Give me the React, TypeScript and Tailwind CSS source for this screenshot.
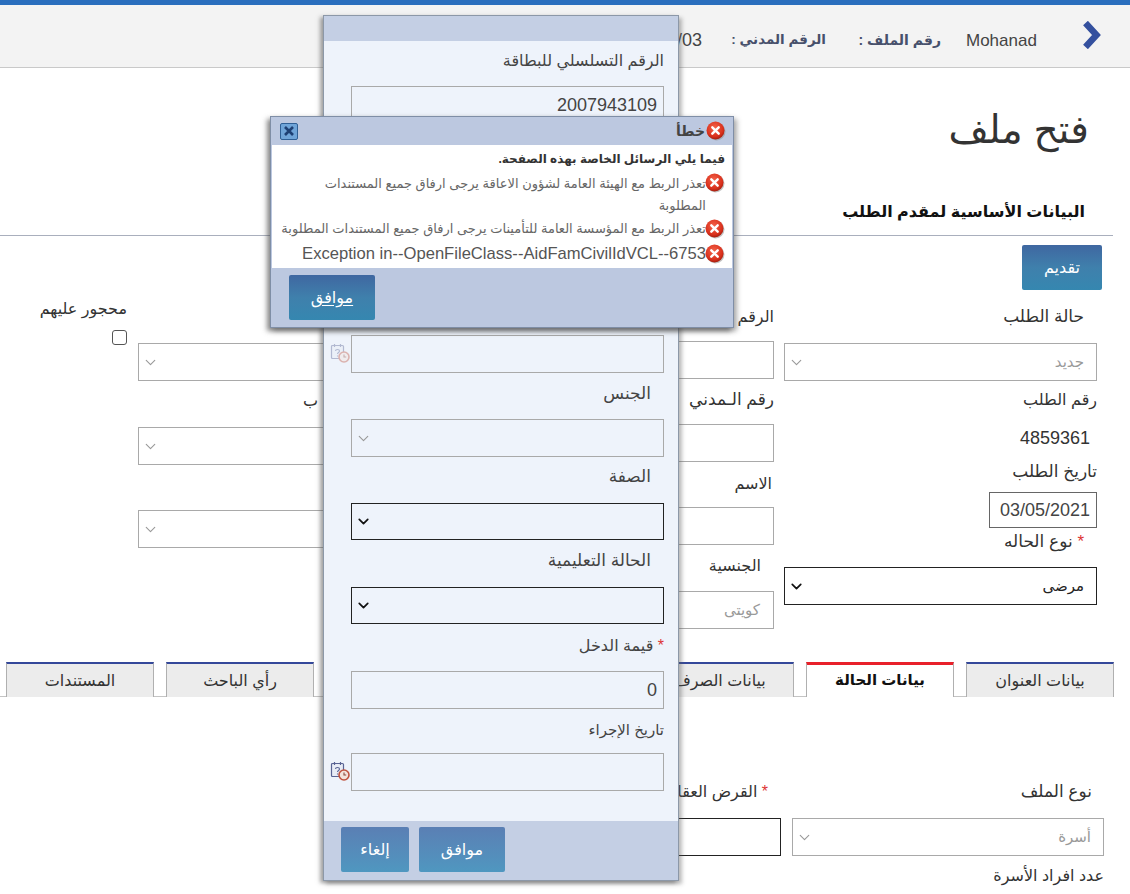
import { ChevronDown } from 'lucide-react'

const font = "[font-family:'Liberation_Sans','DejaVu_Sans',sans-serif]"

function ErrorIcon({ className = '' }: { className?: string }) {
  return (
    <svg viewBox="0 0 20 20" className={`relative z-10 w-[20px] h-[20px] flex-shrink-0 ${className}`}>
      <defs>
        <radialGradient id="errRed" cx="45%" cy="35%" r="70%">
          <stop offset="0%" stopColor="#f4634a" />
          <stop offset="70%" stopColor="#d9301c" />
          <stop offset="100%" stopColor="#93190c" />
        </radialGradient>
      </defs>
      <circle cx="10.5" cy="10.5" r="9" fill="#8a8a8a" opacity="0.5" />
      <circle cx="9.5" cy="9.5" r="9" fill="url(#errRed)" />
      <path d="M6.3 6.3l6.4 6.4M12.7 6.3l-6.4 6.4" stroke="#fff" strokeWidth="2.4" strokeLinecap="round" />
    </svg>
  )
}

function CalendarIcon({ faded = false }: { faded?: boolean }) {
  return (
    <svg viewBox="0 0 20 20" className={`w-[20px] h-[20px] flex-shrink-0 ${faded ? 'opacity-40' : ''}`}>
      <rect x="1.5" y="2.5" width="12" height="13" rx="1" fill="#e8ecf6" stroke="#5a6494" strokeWidth="1.2" />
      <path d="M4.5 1v3M10.5 1v3" stroke="#5a6494" strokeWidth="1.2" />
      <path d="M5.5 8c0-2 4-2 4 0 0 1.500-2 1.500-2 3M7.500 12.500v1" stroke="#5a6494" strokeWidth="1.1" fill="none" />
      <circle cx="14" cy="14" r="5" fill="#f3e3dc" stroke="#c0533f" strokeWidth="1.6" />
      <path d="M14 11.500V14h2.200" stroke="#8b4a3e" strokeWidth="1.1" fill="none" />
    </svg>
  )
}

function Select({ value, dark, className = '' }: { value?: string; dark?: boolean; className?: string }) {
  return (
    <div className={`flex items-center justify-between bg-transparent border pr-[7px] pl-[3px] text-[15px] ${dark ? 'border-[#222] text-[#222]' : 'border-[#a9a9a9] text-[#999]'} ${className}`}>
      <span className="pr-[5px]">{value}</span>
      <ChevronDown size={17} strokeWidth={dark ? 2.4 : 1.6} className={dark ? 'text-[#111]' : 'text-[#999]'} />
    </div>
  )
}

function Box({ value, border = 'border-[#a9a9a9]', className = '' }: { value?: string; border?: string; className?: string }) {
  return (
    <div className={`flex items-center border ${border} px-[6px] text-[18px] text-[#444] ${className}`}>{value}</div>
  )
}

function BlueButton({ label, faded, underline, className = '' }: { label: string; faded?: boolean; underline?: boolean; className?: string }) {
  return (
    <button className={`h-[45px] rounded-[2px] text-white text-[16px] bg-linear-to-b ${faded ? 'from-[#5a7fb4] to-[#4f97c0]' : 'from-[#3f67a1] via-[#3f80ac] to-[#3587b0]'} ${underline ? 'underline underline-offset-2' : ''} ${className}`}>
      {label}
    </button>
  )
}

function Tab({ label, active }: { label: string; active?: boolean }) {
  return (
    <div className={`w-[148px] h-[35px] flex items-center justify-center border-t-[2px] ${active ? 'bg-white border-t-[#e8202a] text-[15px] font-bold text-[#111] shadow-[inset_0_1px_0_#e8202a]' : 'bg-[#ececec] border-t-[#34489a] text-[16px] text-[#333]'} border-x border-x-[#b0b0b0]`}>
      {label}
    </div>
  )
}

export default function App() {
  return (
    <div dir="rtl" className={`${font} relative w-[1130px] h-[894px] overflow-hidden bg-white text-[#333]`}>
      {/* Top bar */}
      <div className="h-[5px] bg-[#2a6ebd]" />
      <header className="h-[63px] bg-[#f3f3f3] border-b border-[#c9c9c9] flex items-center pr-[29px] pt-[9px] whitespace-nowrap">
        <svg viewBox="0 0 18 28" className="w-[19px] h-[28px] -mt-[11px]">
          <path d="M3 2l11 12L3 26" fill="none" stroke="#34509e" strokeWidth="6.5" />
        </svg>
        <span className="mr-[46px] w-[70px] text-[17px] text-[#444]" dir="ltr">Mohanad</span>
        <span className="mr-[25px] w-[82px] text-[14px] font-bold text-[#47506b]">رقم الملف :</span>
        <span className="mr-[33px] w-[94px] text-[13.5px] font-bold text-[#47506b]">الرقم المدني :</span>
        <span dir="ltr" className="mr-[30px] text-[18px] text-[#444]">15/03</span>
      </header>

      <h1 className="mt-[38px] mr-[41px] text-[39px] leading-[48px] text-[#333]">فتح ملف</h1>

      <h2 className="mt-[45px] mr-[45px] text-[16px] leading-[26px] font-bold text-[#111]">البيانات الأساسية لمقدم الطلب</h2>
      <div className="mt-[10px] mr-[17px] h-px bg-[#a9afbd]" />

      <div className="mt-[9px] mr-[28px]">
        <BlueButton label="تقديم" className="w-[80px]" />
      </div>

      {/* Form columns */}
      <div className="flex mt-[7px] mr-[33px] h-[340px] text-[16px] text-[#333]">
        <div className="w-[313px] flex flex-col">
          <label className="mt-[8px] mr-[13px] leading-[24px] text-[17px]">حالة الطلب</label>
          <Select value="جديد" className="mt-[14px] h-[38px]" />
          <label className="mt-[7px] leading-[24px]">رقم الطلب</label>
          <div className="mt-[14px] mr-[7px] leading-[24px] text-[18px]">4859361</div>
          <label className="mt-[10px] leading-[24px] text-[17px]">تاريخ الطلب</label>
          <Box value="03/05/2021" border="border-[#666]" className="mt-[8px] h-[36px] w-[108px] text-[#222]" />
          <label className="mt-[2px] mr-[13px] leading-[24px] text-[17px]"><span className="text-[#d33]">* </span>نوع الحاله</label>
          <Select value="مرضى" dark className="mt-[13px] h-[38px]" />
        </div>

        <div className="w-[330px] mr-[10px] flex flex-col">
          <label className="mt-[8px] leading-[24px]">الرقم</label>
          <Box className="mt-[12px] h-[38px]" />
          <label className="mt-[9px] leading-[24px] text-[17px]">رقم الـمدني</label>
          <Box className="mt-[12px] h-[38px]" />
          <label className="mt-[10px] mr-[2px] leading-[24px]">الاسم</label>
          <Box className="mt-[11px] h-[38px]" />
          <label className="mt-[9px] mr-[13px] leading-[24px]">الجنسية</label>
          <Box value="كويتى" className="mt-[13px] h-[38px] !text-[15px] text-[#999] pr-[13px]" />
        </div>

        <div className="w-[192px] mr-[114px] flex flex-col">
          <Select className="mt-[46px] h-[38px]" />
          <label className="mt-[8px] mr-[12px] leading-[24px]">ب</label>
          <Select className="mt-[14px] h-[38px]" />
          <Select className="mt-[45px] h-[38px]" />
        </div>

        <div className="mr-[11px] flex flex-col items-start">
          <label className="leading-[24px]">محجور عليهم</label>
          <input type="checkbox" className="mt-[9px] w-[15px] h-[15px] appearance-none rounded-[3px] border border-[#555] bg-white" />
        </div>
      </div>

      {/* Tabs */}
      <div className="mt-[25px] mr-[16px] flex gap-[12px] border-b border-[#c4c4c4] h-[35px]">
        <Tab label="بيانات العنوان" />
        <Tab label="بيانات الحالة" active />
        <Tab label="بيانات الصرف" />
        <Tab label="الأبحاث" />
        <Tab label="الزيارات" />
        <Tab label="رأي الباحث" />
        <Tab label="المستندات" />
      </div>

      {/* Lower form */}
      <div className="flex mt-[83px] mr-[26px] text-[16px]">
        <div className="w-[312px] flex flex-col">
          <label className="mr-[12px] leading-[24px] text-[17px]">نوع الملف</label>
          <Select value="أسرة" className="mt-[14px] h-[38px]" />
          <label className="mt-[8px] leading-[24px]">عدد افراد الأسرة</label>
        </div>
        <div className="w-[200px] mr-[11px] flex flex-col">
          <label className="mr-[13px] leading-[24px]"><span className="text-[#d33]">* </span>القرض العقاري</label>
          <Box border="border-[#222]" className="mt-[14px] h-[38px]" />
        </div>
      </div>

      {/* Card dialog */}
      <div className="absolute left-[323px] top-[15px] w-[356px] h-[866px] flex flex-col border border-[#8c98a8] bg-[#eef3fb] shadow-[-3px_2px_4px_rgba(90,90,90,0.55),3px_3px_4px_rgba(90,90,90,0.4)]">
        <div className="h-[25px] bg-[#c4cfe4] flex-shrink-0" />
        <div className="flex-1 pr-[14px] flex flex-col text-[16px] text-[#444]">
          <label className="mt-[8px] leading-[24px]">الرقم التسلسلي للبطاقة</label>
          <Box value="2007943109" className="mt-[13px] h-[38px] w-[313px] text-[#333]" />
          <div className="mt-[211px] flex items-center">
            <Box className="h-[38px] w-[313px]" />
            <span className="mr-[1px] -mt-[3px]"><CalendarIcon faded /></span>
          </div>
          <label className="mt-[9px] mr-[13px] leading-[24px] text-[17px]">الجنس</label>
          <Select className="mt-[13px] h-[38px] w-[313px]" />
          <label className="mt-[8px] mr-[13px] leading-[24px] text-[17px]">الصفة</label>
          <Select dark className="mt-[14px] h-[37px] w-[313px]" />
          <label className="mt-[9px] mr-[13px] leading-[24px] text-[17px]">الحالة التعليمية</label>
          <Select dark className="mt-[14px] h-[37px] w-[313px]" />
          <label className="mt-[10px] leading-[24px]"><span className="text-[#d33]">* </span>قيمة الدخل</label>
          <Box value="0" className="mt-[13px] h-[38px] w-[313px]" />
          <label className="mt-[9px] leading-[24px] text-[15px]">تاريخ الإجراء</label>
          <div className="mt-[11px] flex items-center">
            <Box className="h-[38px] w-[313px]" />
            <span className="mr-[1px] -mt-[3px]"><CalendarIcon /></span>
          </div>
        </div>
        <div className="h-[59px] bg-[#c4cfe4] flex-shrink-0 flex items-start pt-[6px] pr-[173px] gap-[10px]">
          <BlueButton label="موافق" faded className="w-[86px]" />
          <BlueButton label="إلغاء" faded className="w-[68px]" />
        </div>
      </div>

      {/* Error dialog */}
      <div className="absolute left-[270px] top-[116px] w-[464px] h-[212px] flex flex-col border border-[#7f8ea6] bg-[#bcc8e0] shadow-[-3px_3px_5px_rgba(60,60,60,0.6),3px_3px_5px_rgba(60,60,60,0.4)]">
        <div className="h-[28px] flex items-center justify-between pr-[7px] pl-[9px] flex-shrink-0">
          <div className="flex items-center gap-[1px] text-[14px] font-bold text-[#444]">
            <ErrorIcon />
            <span>خطأ</span>
          </div>
          <button className="w-[18px] h-[17px] rounded-[2px] bg-[#6fa4d8] border border-[#2f5f95] flex items-center justify-center">
            <svg viewBox="0 0 12 12" className="w-[12px] h-[12px]">
              <path d="M2 2l8 8M10 2l-8 8" stroke="#1d3f73" strokeWidth="2.600" />
            </svg>
          </button>
        </div>
        <div className="mx-px h-[123px] bg-white pr-[7px] flex flex-col text-[13px] text-[#666]">
          <div className="mt-[4px] leading-[20px] text-[12px] font-bold text-[#333]">فيما يلي الرسائل الخاصة بهذه الصفحة.</div>
          <div className="mt-[4px] flex items-start">
            <ErrorIcon />
            <span className="-mr-[1px] w-[384px] leading-[22px]">تعذر الربط مع الهيئة العامة لشؤون الاعاقة يرجى ارفاق جميع المستندات المطلوبة</span>
          </div>
          <div className="flex items-center">
            <ErrorIcon />
            <span className="-mr-[1px] whitespace-nowrap leading-[24px]">تعذر الربط مع المؤسسة العامة للتأمينات يرجى ارفاق جميع المستندات المطلوبة</span>
          </div>
          <div className="flex items-center">
            <ErrorIcon />
            <span dir="ltr" className="-mr-[1px] leading-[25px] text-[16.6px] text-[#555] whitespace-nowrap">Exception in--OpenFileClass--AidFamCivilIdVCL--6753</span>
          </div>
        </div>
        <div className="flex-1 flex items-center pr-[358px]">
          <BlueButton label="موافق" underline className="w-[86px] flex-shrink-0" />
        </div>
      </div>
    </div>
  )
}
